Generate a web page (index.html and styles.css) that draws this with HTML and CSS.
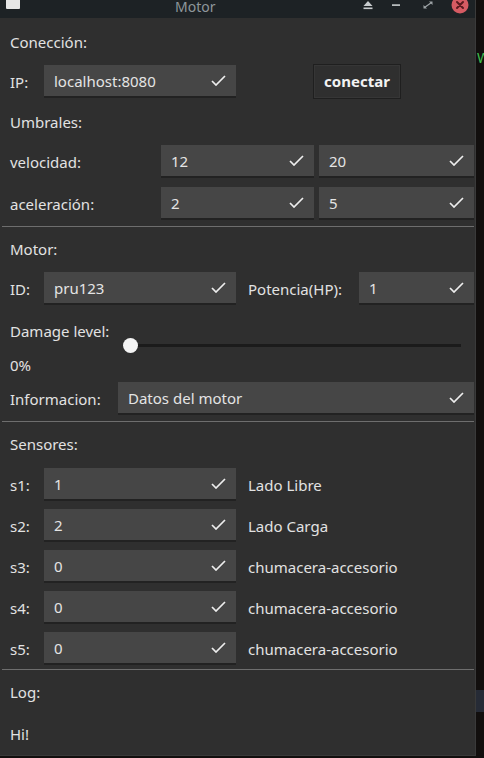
FILE: index.html
```html
<!DOCTYPE html>
<html>
<head>
<meta charset="utf-8">
<link rel="stylesheet" href="styles.css">
</head>
<body>
<div class="desktop">
  <div class="window">
    <div class="titlebar">
      <div class="app-icon"></div>
      <div class="title">Motor</div>
      <div class="controls">
        <svg class="ctl eject" width="12" height="10" viewBox="0 0 12 10"><path d="M6 1 L10.5 6 H1.5 Z" fill="#c8ccce"/><rect x="1.5" y="7.5" width="9" height="1.6" fill="#c8ccce"/></svg>
        <svg class="ctl minimize" width="12" height="10" viewBox="0 0 12 10"><rect x="2" y="4.3" width="8" height="1.6" fill="#c8ccce"/></svg>
        <svg class="ctl maximize" width="12" height="10" viewBox="0 0 12 10"><path d="M7 1.5 H10.5 V5 Z M5 8.5 H1.5 V5 Z" fill="#9ea4a7"/><path d="M9.5 2.5 L2.5 7.5" stroke="#9ea4a7" stroke-width="1.2"/></svg>
        <svg class="close" width="18" height="18" viewBox="0 0 18 18"><circle cx="9" cy="9" r="8.5" fill="#d65b63"/><path d="M6 6 L12 12 M12 6 L6 12" stroke="#5a1a1f" stroke-width="2" stroke-linecap="round"/></svg>
      </div>
    </div>
    <div class="content">
      <div class="lbl h47">Conección:</div>
      <div class="row">
        <div class="rl w34">IP:</div>
        <div class="field w192"><span>localhost:8080</span><svg class="chk" width="15" height="11" viewBox="0 0 15 11"><path d="M1 6 L5 10 L14 1" fill="none" stroke="#eee" stroke-width="1.7"/></svg></div>
        <div class="spacer77"></div>
        <div class="btn">conectar</div>
      </div>
      <div class="lbl h47">Umbrales:</div>
      <div class="row">
        <div class="rl w151">velocidad:</div>
        <div class="field w153"><span>12</span><svg class="chk" width="15" height="11" viewBox="0 0 15 11"><path d="M1 6 L5 10 L14 1" fill="none" stroke="#eee" stroke-width="1.7"/></svg></div>
        <div class="field grow ml5"><span>20</span><svg class="chk" width="15" height="11" viewBox="0 0 15 11"><path d="M1 6 L5 10 L14 1" fill="none" stroke="#eee" stroke-width="1.7"/></svg></div>
      </div>
      <div class="row mt9">
        <div class="rl w151">aceleración:</div>
        <div class="field w153"><span>2</span><svg class="chk" width="15" height="11" viewBox="0 0 15 11"><path d="M1 6 L5 10 L14 1" fill="none" stroke="#eee" stroke-width="1.7"/></svg></div>
        <div class="field grow ml5"><span>5</span><svg class="chk" width="15" height="11" viewBox="0 0 15 11"><path d="M1 6 L5 10 L14 1" fill="none" stroke="#eee" stroke-width="1.7"/></svg></div>
      </div>
      <div class="sep s12"></div>
      <div class="lbl h34">Motor:</div>
      <div class="row mt6">
        <div class="rl w34">ID:</div>
        <div class="field w192"><span>pru123</span><svg class="chk" width="15" height="11" viewBox="0 0 15 11"><path d="M1 6 L5 10 L14 1" fill="none" stroke="#eee" stroke-width="1.7"/></svg></div>
        <div class="rl w123 pl12">Potencia(HP):</div>
        <div class="field grow"><span>1</span><svg class="chk" width="15" height="11" viewBox="0 0 15 11"><path d="M1 6 L5 10 L14 1" fill="none" stroke="#eee" stroke-width="1.7"/></svg></div>
      </div>
      <div class="damage">
        <div class="dcol">
          <div class="lbl h34">Damage level:</div>
          <div class="lbl h34">0%</div>
        </div>
        <div class="slider">
          <div class="track"></div>
          <div class="knob"></div>
        </div>
      </div>
      <div class="row">
        <div class="rl w108">Informacion:</div>
        <div class="field grow"><span>Datos del motor</span><svg class="chk" width="15" height="11" viewBox="0 0 15 11"><path d="M1 6 L5 10 L14 1" fill="none" stroke="#eee" stroke-width="1.7"/></svg></div>
      </div>
      <div class="sep s12"></div>
      <div class="lbl h34">Sensores:</div>
      <div class="sensors">
        <div class="row">
          <div class="rl w34">s1:</div>
          <div class="field w192"><span>1</span><svg class="chk" width="15" height="11" viewBox="0 0 15 11"><path d="M1 6 L5 10 L14 1" fill="none" stroke="#eee" stroke-width="1.7"/></svg></div>
          <div class="rl pl12">Lado Libre</div>
        </div>
        <div class="row">
          <div class="rl w34">s2:</div>
          <div class="field w192"><span>2</span><svg class="chk" width="15" height="11" viewBox="0 0 15 11"><path d="M1 6 L5 10 L14 1" fill="none" stroke="#eee" stroke-width="1.7"/></svg></div>
          <div class="rl pl12">Lado Carga</div>
        </div>
        <div class="row">
          <div class="rl w34">s3:</div>
          <div class="field w192"><span>0</span><svg class="chk" width="15" height="11" viewBox="0 0 15 11"><path d="M1 6 L5 10 L14 1" fill="none" stroke="#eee" stroke-width="1.7"/></svg></div>
          <div class="rl pl12">chumacera-accesorio</div>
        </div>
        <div class="row">
          <div class="rl w34">s4:</div>
          <div class="field w192"><span>0</span><svg class="chk" width="15" height="11" viewBox="0 0 15 11"><path d="M1 6 L5 10 L14 1" fill="none" stroke="#eee" stroke-width="1.7"/></svg></div>
          <div class="rl pl12">chumacera-accesorio</div>
        </div>
        <div class="row">
          <div class="rl w34">s5:</div>
          <div class="field w192"><span>0</span><svg class="chk" width="15" height="11" viewBox="0 0 15 11"><path d="M1 6 L5 10 L14 1" fill="none" stroke="#eee" stroke-width="1.7"/></svg></div>
          <div class="rl pl12">chumacera-accesorio</div>
        </div>
      </div>
      <div class="sep s8"></div>
      <div class="lbl h38">Log:</div>
      <div class="lbl h46">Hi!</div>
    </div>
  </div>
  <div class="behind">
    <div class="bg-w">W</div>
    <div class="bg-block"></div>
  </div>
</div>
</body>
</html>
```

FILE: styles.css
```css
html, body {
  margin: 0;
  padding: 0;
  background: #120f0e;
}
.desktop {
  display: flex;
  width: 484px;
  height: 758px;
  overflow: hidden;
  font-family: "Noto Sans", "Open Sans", sans-serif;
  font-size: 15px;
  color: #e2e2e2;
}
.window {
  width: 476px;
  height: 756px;
  display: flex;
  flex-direction: column;
  background: #2f2f2f;
  border-right: 1px solid #3a3a3a;
  border-bottom: 1px solid #3a3a3a;
  box-sizing: border-box;
}
.titlebar {
  height: 18px;
  flex: none;
  background: #1d2225;
  position: relative;
}
.app-icon {
  position: absolute;
  left: 6px;
  top: 0;
  width: 14px;
  height: 9px;
  background: #e6e6e6;
  border-radius: 0 0 1px 1px;
}
.title {
  position: absolute;
  left: 175px;
  top: -1px;
  font-size: 14px;
  line-height: 16px;
  color: #8e979b;
}
.controls {
  position: absolute;
  right: 6px;
  top: -4px;
  display: flex;
  align-items: center;
}
.ctl { display: block; }
.minimize { margin-left: 16px; }
.maximize { margin-left: 20px; }
.close { display: block; margin-left: 17px; }
.content {
  flex: 1;
  display: flex;
  flex-direction: column;
  padding-left: 10px;
  padding-right: 1px;
}
.lbl {
  display: flex;
  align-items: center;
  white-space: nowrap;
}
.h47 { height: 47px; }
.h34 { height: 34px; }
.h38 { height: 38px; }
.h46 { height: 46px; }
.row {
  display: flex;
  align-items: center;
  height: 33px;
  flex: none;
}
.mt9 { margin-top: 9px; }
.mt6 { margin-top: 6px; }
.rl {
  flex: none;
  white-space: nowrap;
}
.w34 { width: 34px; }
.w151 { width: 151px; }
.w108 { width: 108px; }
.w123 { width: 123px; box-sizing: border-box; }
.pl12 { padding-left: 12px; }
.field {
  flex: none;
  height: 33px;
  box-sizing: border-box;
  background: #464646;
  border-bottom: 2px solid #222;
  display: flex;
  align-items: center;
  padding-left: 10px;
  padding-right: 10px;
  color: #e4e4e4;
}
.field span { flex: 1; padding-top: 1px; }
.chk { display: block; flex: none; }
.w192 { width: 192px; }
.w153 { width: 153px; }
.grow { flex: 1; }
.ml5 { margin-left: 5px; }
.spacer77 { width: 77px; flex: none; }
.btn {
  flex: none;
  width: 88px;
  height: 35px;
  box-sizing: border-box;
  border: 1px solid #1f1f1f;
  box-shadow: inset 0 0 0 1px #363636;
  display: flex;
  align-items: center;
  justify-content: center;
  font-weight: bold;
  color: #f2f2f2;
  margin-top: -1px;
}
.sep {
  flex: none;
  margin-left: -8px;
  position: relative;
}
.sep::after {
  content: "";
  position: absolute;
  left: 0;
  right: 0;
  height: 1px;
  background: #6e6e6e;
}
.s12 { height: 12px; }
.s12::after { top: 6px; }
.s8 { height: 8px; }
.s8::after { top: 4px; }
.damage {
  display: flex;
  height: 77px;
  flex: none;
}
.dcol {
  width: 113px;
  padding-top: 9px;
  display: flex;
  flex-direction: column;
}
.slider {
  flex: 1;
  position: relative;
  margin-right: 13px;
}
.track {
  position: absolute;
  left: 14px;
  right: 0;
  top: 39px;
  height: 3px;
  background: #1b1b1b;
}
.knob {
  position: absolute;
  left: 0;
  top: 33px;
  width: 15px;
  height: 15px;
  border-radius: 50%;
  background: #f4f4f4;
}
.sensors {
  display: flex;
  flex-direction: column;
  gap: 8px;
  margin-top: 7px;
}
.behind {
  flex: 1;
  position: relative;
}
.bg-w {
  position: absolute;
  left: 1px;
  top: 48px;
  font-size: 14px;
  color: #3fbf4f;
}
.bg-block {
  position: absolute;
  left: 0;
  right: 0;
  top: 690px;
  height: 22px;
  background: #262b36;
}
```
